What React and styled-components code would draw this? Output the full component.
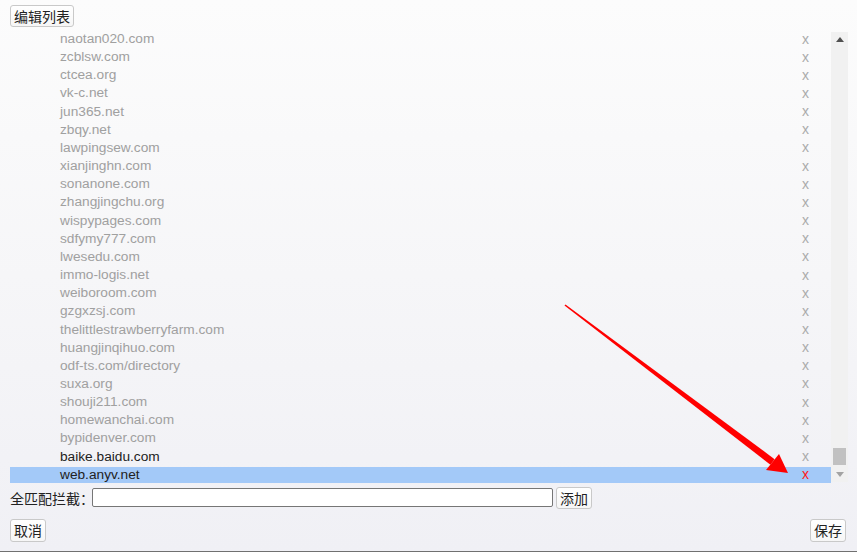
import React from "react";
import styled, { createGlobalStyle } from "styled-components";

const GlobalStyle = createGlobalStyle`
  html, body {
    margin: 0;
    padding: 0;
  }
  body {
    font-family: "Liberation Sans", "Noto Sans CJK SC", Arial, sans-serif;
    color: #222;
  }
`;

const domains = [
  "naotan020.com",
  "zcblsw.com",
  "ctcea.org",
  "vk-c.net",
  "jun365.net",
  "zbqy.net",
  "lawpingsew.com",
  "xianjinghn.com",
  "sonanone.com",
  "zhangjingchu.org",
  "wispypages.com",
  "sdfymy777.com",
  "lwesedu.com",
  "immo-logis.net",
  "weiboroom.com",
  "gzgxzsj.com",
  "thelittlestrawberryfarm.com",
  "huangjinqihuo.com",
  "odf-ts.com/directory",
  "suxa.org",
  "shouji211.com",
  "homewanchai.com",
  "bypidenver.com",
];

const Page = styled.div`
  position: relative;
  box-sizing: border-box;
  width: 857px;
  height: 552px;
  padding: 5px 9px 0 10px;
  background: linear-gradient(to bottom, #fcfcfc 0%, #f6f6f8 50%, #f0f0f5 100%);
  border-bottom: 1px solid #707070;
  overflow: hidden;
  display: flex;
  flex-direction: column;
`;

const Button = styled.button`
  flex: none;
  font-family: "Noto Sans CJK SC", "Liberation Sans", sans-serif;
  font-size: 14px;
  line-height: 18px;
  color: #222;
  height: ${(p) => p.$h || 22}px;
  padding: 0 3px;
  background: linear-gradient(#ffffff, #f6f6f6);
  border: 1px solid #c9c9c9;
  border-radius: 3px;
  cursor: pointer;
`;

const TopBar = styled.div`
  display: flex;
`;

const ListArea = styled.div`
  display: flex;
  height: 454px;
  margin-top: 1.5px;
`;

const Rows = styled.div`
  flex: 1;
  display: flex;
  flex-direction: column;
  justify-content: flex-end;
  overflow: hidden;
`;

const Row = styled.div`
  flex: none;
  display: flex;
  align-items: center;
  height: 15.5px;
  margin-top: 2.67px;
  padding-left: 50px;
  font-size: 13.7px;
  background: ${(p) => (p.$active ? "#a3c9f8" : "transparent")};
  color: ${(p) => (p.$dark ? "#222" : "#a0a0a0")};
`;

const Domain = styled.span`
  flex: 1;
  white-space: nowrap;
  margin-top: -1px;
`;

const Remove = styled.span`
  width: 8px;
  margin-right: 21px;
  margin-top: -1px;
  font-size: 14px;
  color: ${(p) => (p.$active ? "#ff1a1a" : "#ababab")};
  cursor: pointer;
`;

const Scrollbar = styled.div`
  align-self: flex-end;
  width: 17px;
  height: 450px;
  margin-bottom: 1px;
  background: #f1f1f1;
  display: flex;
  flex-direction: column;
  align-items: center;
`;

const ArrowBtn = styled.div`
  height: 15px;
  width: 17px;
  display: flex;
  align-items: center;
  justify-content: center;
`;

const Track = styled.div`
  flex: 1;
  width: 100%;
  display: flex;
  flex-direction: column;
  justify-content: flex-end;
  align-items: center;
`;

const Thumb = styled.div`
  width: 13px;
  height: 17px;
  background: #c1c1c1;
  margin-bottom: 2px;
`;

const AddRow = styled.div`
  display: flex;
  align-items: center;
  margin-top: 4px;
  height: 22px;
`;

const Label = styled.span`
  flex: none;
  white-space: nowrap;
  font-family: "Noto Sans CJK SC", sans-serif;
  font-size: 14px;
  width: 82px;
`;

const TextInput = styled.input`
  flex: none;
  box-sizing: border-box;
  width: 461px;
  height: 19px;
  margin-right: 3px;
  border: 1px solid #767676;
  border-radius: 2px;
  background: #fff;
  padding: 1px 2px;
`;

const Footer = styled.div`
  display: flex;
  justify-content: space-between;
  margin-top: 10px;
  padding-right: 2px;
`;

const Annotation = styled.svg`
  position: absolute;
  left: 0;
  top: 0;
  pointer-events: none;
`;

export default function App() {
  return (
    <>
      <GlobalStyle />
      <Page>
        <TopBar>
          <Button>编辑列表</Button>
        </TopBar>
        <ListArea>
          <Rows>
            {domains.map((d) => (
              <Row key={d}>
                <Domain>{d}</Domain>
                <Remove>x</Remove>
              </Row>
            ))}
            <Row $dark>
              <Domain>baike.baidu.com</Domain>
              <Remove>x</Remove>
            </Row>
            <Row $dark $active>
              <Domain>web.anyv.net</Domain>
              <Remove $active>x</Remove>
            </Row>
          </Rows>
          <Scrollbar>
            <ArrowBtn>
              <svg width="8" height="5" viewBox="0 0 8 5">
                <path d="M0 5 L4 0 L8 5 Z" fill="#505050" />
              </svg>
            </ArrowBtn>
            <Track>
              <Thumb />
            </Track>
            <ArrowBtn>
              <svg width="8" height="5" viewBox="0 0 8 5">
                <path d="M0 0 L8 0 L4 5 Z" fill="#a3a3a3" />
              </svg>
            </ArrowBtn>
          </Scrollbar>
        </ListArea>
        <AddRow>
          <Label>全匹配拦截：</Label>
          <TextInput />
          <Button>添加</Button>
        </AddRow>
        <Footer>
          <Button $h={23}>取消</Button>
          <Button $h={23}>保存</Button>
        </Footer>
        <Annotation width="857" height="552" viewBox="0 0 857 552">
          <polygon
            points="565.5,304.4 564.5,305.6 770.4,464.8 774.6,459.2"
            fill="#ff0000"
          />
          <polygon points="788,473 766,470 779,454" fill="#ff0000" />
        </Annotation>
      </Page>
    </>
  );
}
